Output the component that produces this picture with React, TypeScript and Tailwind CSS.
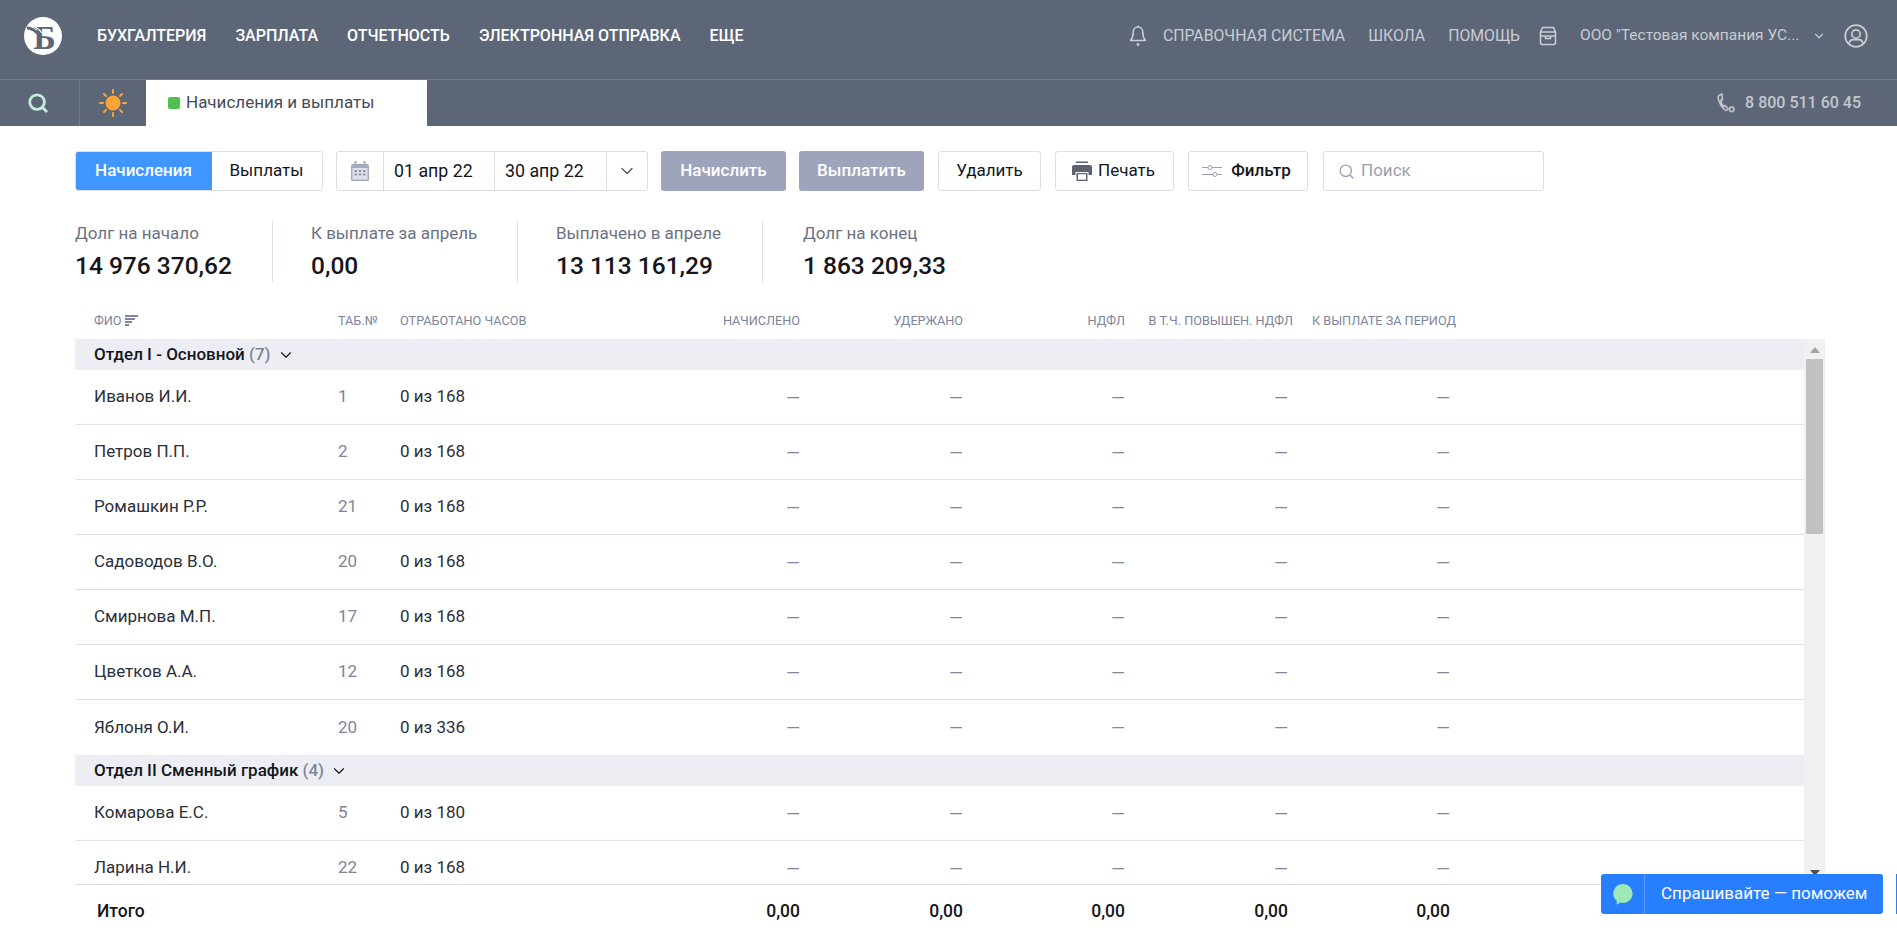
import { ChevronDown, Search } from "lucide-react";

const font = "font-['Roboto','Noto_Sans',sans-serif]";

const groups = [
  {
    title: "Отдел I - Основной",
    count: 7,
    rows: [
      ["Иванов И.И.", "1", "0 из 168"],
      ["Петров П.П.", "2", "0 из 168"],
      ["Ромашкин Р.Р.", "21", "0 из 168"],
      ["Садоводов В.О.", "20", "0 из 168"],
      ["Смирнова М.П.", "17", "0 из 168"],
      ["Цветков А.А.", "12", "0 из 168"],
      ["Яблоня О.И.", "20", "0 из 336"],
    ],
  },
  {
    title: "Отдел II Сменный график",
    count: 4,
    rows: [
      ["Комарова Е.С.", "5", "0 из 180"],
      ["Ларина Н.И.", "22", "0 из 168"],
    ],
  },
];

const gridCols = "grid grid-cols-[244px_62px_200px_200px_163px_162px_163px_162px]";

function Logo() {
  return (
    <div className="relative w-[38px] h-[38px] rounded-full bg-white overflow-hidden flex items-center justify-center">
      <span className="font-['Liberation_Serif',serif] font-bold text-[34px] leading-none text-[#5c6677] mt-[3px] ml-[3px]">
        Б
      </span>
      <svg viewBox="0 0 38 38" className="absolute inset-0 w-full h-full">
        <path d="M3 11c5 0 9 3 13 8" fill="none" stroke="#5c6677" strokeWidth="3" />
        <path d="M6 9c5 0 9 3 12 7" fill="none" stroke="#fff" strokeWidth="1.2" />
      </svg>
    </div>
  );
}

function SunIcon() {
  return (
    <svg width="28" height="28" viewBox="0 0 28 28" fill="none">
      <circle cx="14" cy="14" r="7.5" fill="#fba536" />
      <g stroke="#fba536" strokeWidth="2" strokeLinecap="round">
        <path d="M14 1v3M14 24v3M1 14h3M24 14h3M5 5l2 2M21 21l2 2M5 23l2-2M21 7l2-2" />
      </g>
    </svg>
  );
}

function BellIcon() {
  return (
    <svg width="18" height="22" viewBox="0 0 18 22" fill="none" stroke="#c9ccd3" strokeWidth="1.6" strokeLinejoin="round">
      <path d="M9 2c-3 0-4.800 2.200-4.800 5.200 0 4-1 6.500-2.700 8.300h15c-1.700-1.800-2.700-4.300-2.700-8.300C13.800 4.200 12 2 9 2z" />
      <path d="M9 .8V2" />
      <circle cx="9" cy="19.500" r="1.400" fill="#c9ccd3" stroke="none" />
    </svg>
  );
}

function BoxIcon() {
  return (
    <svg width="18" height="20" viewBox="0 0 18 20" fill="none" stroke="#c9ccd3" strokeWidth="1.6">
      <path d="M3.500 1.500h11L16.500 6v10.500a2 2 0 0 1-2 2h-11a2 2 0 0 1-2-2V6z" />
      <path d="M1.500 10h15M1.500 6h15M6.500 10v2.500h5V10" />
    </svg>
  );
}

function UserIcon() {
  return (
    <svg width="24" height="24" viewBox="0 0 24 24" fill="none" stroke="#c9ccd3" strokeWidth="1.7">
      <circle cx="12" cy="12" r="10.800" />
      <circle cx="12" cy="10" r="4.200" />
      <path d="M5 19.500c.6-2.500 2.500-3.800 4.200-3.800h5.600c1.700 0 3.600 1.300 4.200 3.800" />
    </svg>
  );
}

function PhoneIcon() {
  return (
    <svg width="18" height="20" viewBox="0 0 18 20" fill="none" stroke="#c3c6ce" strokeWidth="1.6" strokeLinecap="round">
      <path d="M4.800 1 2 2.500C.8 3.500 1 5 1.600 7c1 3.400 3 7 5.600 9.500 1.200 1.100 2.300 1 3 .3l.8-1-3-3.200-1.500 1C5 11.800 4.100 9.500 3.800 7.300l1.700-.8z" />
      <circle cx="14.700" cy="16.300" r="2.300" />
    </svg>
  );
}

function PrintIcon() {
  return (
    <svg width="20" height="20" viewBox="0 0 20 20" fill="#5c6272">
      <rect x="4" y="0.500" width="12" height="1.500" />
      <path d="M2 4h16a2 2 0 0 1 2 2v8h-3.500v-3h-13v3H0V6a2 2 0 0 1 2-2z" />
      <path d="M4.500 12h11v8h-11z" />
      <path d="M6 13.200h8v5.500H6z" fill="#fff" />
    </svg>
  );
}

function CalendarIcon() {
  return (
    <svg width="18" height="20" viewBox="0 0 18 20">
      <rect x="0" y="3" width="18" height="17" rx="1.5" fill="#a5acc2" />
      <rect x="3.5" y="0" width="2" height="5" fill="#a5acc2" />
      <rect x="12.5" y="0" width="2" height="5" fill="#a5acc2" />
      <rect x="1.5" y="7" width="15" height="11.5" fill="#dfe2ea" />
      <g fill="#8b93ad">
        <rect x="3.500" y="9" width="2.400" height="2" />
        <rect x="7.800" y="9" width="2.400" height="2" />
        <rect x="12.100" y="9" width="2.400" height="2" />
        <rect x="3.500" y="12.500" width="2.400" height="2" />
        <rect x="7.800" y="12.500" width="2.400" height="2" />
        <rect x="12.100" y="12.500" width="2.400" height="2" />
      </g>
    </svg>
  );
}

function FilterIcon() {
  return (
    <svg width="20" height="14" viewBox="0 0 20 14" fill="none" stroke="#9aa0ae" strokeWidth="1">
      <path d="M0 3.500h6M10 3.500h10M0 10.500h11M15 10.500h5" />
      <circle cx="8" cy="3.500" r="2" />
      <circle cx="13" cy="10.500" r="2" />
    </svg>
  );
}

function SortIcon() {
  return (
    <svg width="13" height="11" viewBox="0 0 13 11" fill="#7d849c">
      <rect x="0" y="0" width="13" height="2" />
      <rect x="0" y="3" width="10" height="2" />
      <rect x="0" y="6" width="7" height="2" />
      <rect x="0" y="9" width="4" height="2" />
    </svg>
  );
}

function Stat({ label, value, last }: { label: string; value: string; last?: boolean }) {
  return (
    <div className={`h-[61px] flex flex-col ${last ? "" : "border-r border-[#dcdee6]"}`}>
      <div className="text-[17px] leading-[24px] text-[#6c7283]">{label}</div>
      <div className="mt-[3px] text-[24.500px] leading-[36px] font-medium text-[#14161c]">{value}</div>
    </div>
  );
}

function Dash() {
  return <span className="text-right text-[#8087a3] text-[18px]">—</span>;
}

export default function App() {
  return (
    <div className={`${font} w-[1897px] h-[937px] overflow-hidden bg-white flex flex-col relative`}>
      {/* top bar */}
      <header className="h-[126px] shrink-0 bg-[#5c6677]">
        <div className="h-[80px] border-b border-[#707a8a] flex items-center pl-[24px] pr-[29px] pb-[7px]">
          <Logo />
          <nav className="ml-[35px] flex gap-[29px] text-[16px] font-medium text-white uppercase">
            {["Бухгалтерия", "Зарплата", "Отчетность", "Электронная отправка", "Еще"].map((item) => (
              <span key={item}>{item}</span>
            ))}
          </nav>
          <div className="ml-auto flex items-center text-[15.800px] text-[#c9ccd3] uppercase">
            <BellIcon />
            <span className="ml-[16px]">Справочная система</span>
            <span className="ml-[23px]">Школа</span>
            <span className="ml-[23px]">Помощь</span>
            <span className="ml-[19px]">
              <BoxIcon />
            </span>
            <span className="ml-[23px] w-[223px] normal-case whitespace-nowrap text-[15.500px]">ООО "Тестовая компания УС...</span>
            <ChevronDown size={14} strokeWidth={2} className="ml-[9px]" />
            <span className="ml-[18px]">
              <UserIcon />
            </span>
          </div>
        </div>
        <div className="h-[46px] flex items-stretch">
          <div className="w-[80px] border-r border-[#707a8a] flex items-center justify-center">
            <Search size={22} strokeWidth={3} className="text-[#c6efdb] -ml-[3px]" />
          </div>
          <div className="w-[66px] flex items-center justify-center">
            <SunIcon />
          </div>
          <div className="w-[281px] bg-white flex items-center pl-[22px] gap-[6px] text-[17px] text-[#454b5a]">
            <span className="w-[12px] h-[12px] rounded-[2px] bg-[#50c14e]" />
            Начисления и выплаты
          </div>
          <div className="ml-auto pr-[36px] flex items-center gap-[10px] text-[#c3c6ce] text-[16px] font-medium">
            <PhoneIcon />
            8 800 511 60 45
          </div>
        </div>
      </header>

      {/* toolbar */}
      <div className="mt-[25px] ml-[75px] flex items-stretch h-[40px] text-[17px] text-[#14161c]">
        <div className="flex w-[248px] rounded-[3px] border border-[#dcdee6] overflow-hidden">
          <div className="w-[137px] -m-px bg-[#4096ff] text-white font-medium flex items-center justify-center">Начисления</div>
          <div className="flex-1 flex items-center justify-center">Выплаты</div>
        </div>
        <div className="ml-[13px] w-[312px] flex rounded-[3px] border border-[#dcdee6] text-[17.800px]">
          <div className="w-[47px] border-r border-[#dcdee6] flex items-center justify-center">
            <CalendarIcon />
          </div>
          <div className="w-[111px] border-r border-[#dcdee6] flex items-center pl-[10px]">01 апр 22</div>
          <div className="w-[112px] border-r border-[#dcdee6] flex items-center pl-[10px]">30 апр 22</div>
          <div className="flex-1 flex items-center justify-center">
            <ChevronDown size={20} strokeWidth={1.5} className="text-[#4c5264]" />
          </div>
        </div>
        <div className="ml-[13px] w-[125px] rounded-[3px] bg-[#9da4bc] text-white font-medium flex items-center justify-center">Начислить</div>
        <div className="ml-[13px] w-[125px] rounded-[3px] bg-[#9da4bc] text-white font-medium flex items-center justify-center">Выплатить</div>
        <div className="ml-[14px] w-[103px] rounded-[3px] border border-[#dcdee6] flex items-center justify-center">Удалить</div>
        <div className="ml-[14px] w-[119px] rounded-[3px] border border-[#dcdee6] flex items-center justify-center gap-[6px] pr-[2px]">
          <PrintIcon />
          Печать
        </div>
        <div className="ml-[14px] w-[120px] rounded-[3px] border border-[#dcdee6] font-medium flex items-center justify-center gap-[9px] pr-[3px]">
          <FilterIcon />
          Фильтр
        </div>
        <div className="ml-[15px] w-[221px] rounded-[3px] border border-[#dcdee6] flex items-center pl-[14px] gap-[6px] text-[#9a9fb0]">
          <Search size={17} strokeWidth={2} className="text-[#9da4bc]" />
          Поиск
        </div>
      </div>

      {/* totals */}
      <div className="mt-[30px] ml-[75px] grid grid-cols-[198px_245px_245px_200px]">
        <Stat label="Долг на начало" value="14 976 370,62" />
        <div className="pl-[38px]">
          <Stat label="К выплате за апрель" value="0,00" />
        </div>
        <div className="pl-[38px]">
          <Stat label="Выплачено в апреле" value="13 113 161,29" />
        </div>
        <div className="pl-[40px]">
          <Stat label="Долг на конец" value="1 863 209,33" last />
        </div>
      </div>

      {/* table */}
      <div className="ml-[75px] w-[1750px] mt-[23px] flex-1 flex flex-col min-h-0">
        <div className={`${gridCols} h-[34px] pb-[2px] pl-[19px] items-center text-[12.700px] uppercase text-[#7d849c]`}>
          <span className="flex items-center gap-[3px]">
            ФИО <SortIcon />
          </span>
          <span>Таб.№</span>
          <span className="whitespace-nowrap">Отработано часов</span>
          <span className="text-right">Начислено</span>
          <span className="text-right">Удержано</span>
          <span className="text-right">НДФЛ</span>
          <span className="text-right whitespace-nowrap -mr-[5px]">В т.ч. повышен. НДФЛ</span>
          <span className="text-right whitespace-nowrap -mr-[6px]">К выплате за период</span>
        </div>

        <div className="h-[545px] flex">
          <div className="flex-1 overflow-hidden">
            {groups.map((g) => (
              <div key={g.title}>
                <div className="h-[31px] bg-[#edeef3] pl-[19px] flex items-center gap-[6px] text-[17px] font-medium text-[#14161c]">
                  <span>
                    {g.title} <span className="text-[#7d849c]">({g.count})</span>
                  </span>
                  <ChevronDown size={18} strokeWidth={1.5} />
                </div>
                {g.rows.map((r, i) => (
                  <div
                    key={r[0]}
                    className={`${gridCols} h-[55px] pl-[19px] items-center text-[17px] text-[#2b2f3a] ${
                      i === g.rows.length - 1 && g.count === 7 ? "" : "border-b border-[#e1e2e9]"
                    }`}
                  >
                    <span>{r[0]}</span>
                    <span className="text-[#7d849c]">{r[1]}</span>
                    <span>{r[2]}</span>
                    <Dash />
                    <Dash />
                    <Dash />
                    <Dash />
                    <Dash />
                  </div>
                ))}
              </div>
            ))}
          </div>
          {/* scrollbar */}
          <div className="w-[21px] bg-[#f1f1f1] flex flex-col items-center relative">
            <div className="mt-[8px] w-0 h-0 border-x-[5px] border-x-transparent border-b-[6px] border-b-[#a3a3a3]" />
            <div className="mt-[6px] w-[17px] h-[175px] bg-[#c1c1c1]" />
            <div className="mt-auto mb-[8px] w-0 h-0 border-x-[5px] border-x-transparent border-t-[6px] border-t-[#505050]" />
          </div>
        </div>

        <div className={`${gridCols} flex-1 pl-[19px] items-center border-t border-[#dcdee6] text-[17.500px] font-medium text-[#14161c]`}>
          <span className="pl-[3px]">Итого</span>
          <span />
          <span />
          <span className="text-right">0,00</span>
          <span className="text-right">0,00</span>
          <span className="text-right">0,00</span>
          <span className="text-right">0,00</span>
          <span className="text-right">0,00</span>
        </div>
      </div>

      {/* chat */}
      <div className="absolute left-[1601px] top-[874px] w-[282px] h-[40px] rounded-[3px] bg-[#277eff] flex items-center text-white text-[17px]">
        <div className="w-[44px] h-full border-r border-[#5c9dff] flex items-center justify-center">
          <svg width="20" height="21" viewBox="0 0 20 21">
            <path d="M10 0a9.800 9.500 0 1 1-3 18.600C5.500 20 4 20.600 3.500 20.600c.3-1 .4-2.500.1-4A9.800 9.500 0 0 1 10 0z" fill="#9ce8b6" />
          </svg>
        </div>
        <span className="pl-[16px] whitespace-nowrap">Спрашивайте — поможем</span>
      </div>
      <div className="absolute left-[1896px] top-[874px] w-[1px] h-[40px] bg-[#277eff]" />
    </div>
  );
}
